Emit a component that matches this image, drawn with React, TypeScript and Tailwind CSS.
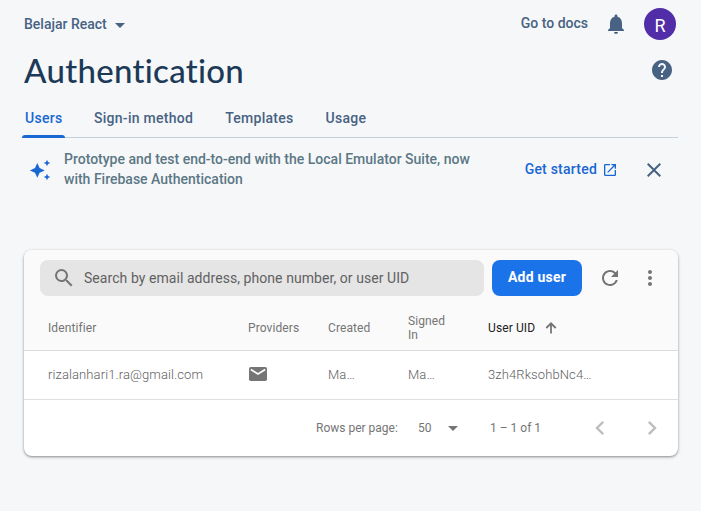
import React from 'react';
import {
  MdArrowDropDown,
  MdChevronLeft,
  MdChevronRight,
  MdClose,
  MdHelp,
  MdMoreVert,
  MdNotifications,
  MdOpenInNew,
  MdRefresh,
  MdSearch,
} from 'react-icons/md';

const tabs = ['Users', 'Sign-in method', 'Templates', 'Usage'];

function Sparkle() {
  return (
    <svg width="24" height="24" viewBox="0 0 24 24" fill="currentColor">
      <path d="M9.3 5 L11.6 10.1 L16.7 12.4 L11.6 14.7 L9.3 19.8 L7 14.7 L1.9 12.4 L7 10.1 Z" />
      <path d="M19 1.7 L20 4 L22.3 5 L20 6 L19 8.3 L18 6 L15.7 5 L18 4 Z" />
      <path d="M19 15.7 L20 18 L22.3 19 L20 20 L19 22.3 L18 20 L15.7 19 L18 18 Z" />
    </svg>
  );
}

function Mail() {
  return (
    <svg width="18" height="14" viewBox="0 0 18 14" className="-mt-[3px] ml-px">
      <rect width="18" height="14" rx="1.8" fill="#757575" />
      <path d="M1.8 2.5 L9 7 L16.2 2.5" fill="none" stroke="white" strokeWidth="1.7" />
    </svg>
  );
}

function SortArrow() {
  return (
    <svg width="16" height="16" viewBox="0 0 16 16" className="ml-2 text-[#757575]">
      <path d="M8 13.5 V4 M3.3 8 L8 3.3 L12.7 8" fill="none" stroke="currentColor" strokeWidth="1.8" />
    </svg>
  );
}

function Header() {
  return (
    <header>
      <div className="flex h-12 items-center pr-[25px] pl-6 text-[14px] font-medium text-[#476282]">
        <span className="w-[84px] whitespace-nowrap">Belajar React</span>
        <MdArrowDropDown size={24} className="mt-0.5" />
        <span className="-mt-0.5 ml-auto">Go to docs</span>
        <MdNotifications size={24} className="ml-4" />
        <span className="ml-4 flex h-8 w-8 items-center justify-center rounded-full bg-[#512da8] pt-0.5 text-[18px] font-normal text-white">
          R
        </span>
      </div>
      <div className="flex h-[45px] items-center justify-between pr-[27px] pl-6">
        <h1 className="-mt-0.5 font-['Lato','Liberation_Sans',sans-serif] text-[33px] leading-[44px] font-medium tracking-[0.3px] text-[#1c3a57] [font-variant-ligatures:none]">
          Authentication
        </h1>
        <MdHelp size={24} className="-mt-px text-[#476282]" />
      </div>
    </header>
  );
}

function Tabs() {
  return (
    <nav className="mr-[23px] ml-[22px] flex h-[45px] gap-8 border-b border-[#c3d0de] text-[14px] font-medium tracking-[0.27px] text-[#476282]">
      {tabs.map((tab, i) => (
        <div
          key={tab}
          className={
            i === 0
              ? 'relative -mr-[3px] h-[45px] w-[43px] pt-[15px] pl-[3px] leading-5 text-[#1967d2]'
              : 'pt-[15px] leading-5 whitespace-nowrap'
          }
        >
          {tab}
          {i === 0 && <span className="absolute bottom-0 left-0 h-[3px] w-[43px] rounded-t-[3px] bg-[#1967d2]" />}
        </div>
      ))}
    </nav>
  );
}

function Banner() {
  return (
    <section className="flex h-16 items-center pr-[35px] pl-7 text-[14px] font-medium">
      <span className="text-[#1967d2]">
        <Sparkle />
      </span>
      <p className="-mt-0.5 ml-3 w-[430px] leading-5 text-[#5b7785]">
        Prototype and test end-to-end with the Local Emulator Suite, now
        <br />
        with Firebase Authentication
      </p>
      <a className="ml-auto flex items-center tracking-[0.22px] text-[#1967d2]">
        <span className="-mt-0.5">Get started</span>
        <MdOpenInNew size={16} className="ml-[5px]" />
      </a>
      <MdClose size={24} className="ml-6 text-[#476282]" />
    </section>
  );
}

const columns = 'grid grid-cols-[200px_80px_80px_80px_1fr] items-center pl-6';

function UsersCard() {
  return (
    <section className="mx-6 mt-12 mr-[23px] h-[206px] overflow-hidden rounded-lg bg-white text-[#757575] shadow-[0_1px_2px_rgba(0,0,0,0.3),0_1px_3px_1px_rgba(0,0,0,0.12)]">
      <div className="h-[101px] border-b border-[#dcdcdc] bg-[#fafafa]">
        <div className="flex items-center pt-[10px] pl-4">
          <div className="flex h-9 w-[444px] items-center rounded-lg bg-[#e5e5e5] pl-3">
            <MdSearch size={24} />
            <span className="ml-2 text-[14px] tracking-[0.06px] text-[#616161]">
              Search by email address, phone number, or user UID
            </span>
          </div>
          <button className="ml-2 h-9 w-[90px] rounded-lg bg-[#1a73e8] pb-0.5 text-[14px] font-bold tracking-[0.2px] text-white">
            Add user
          </button>
          <MdRefresh size={24} className="ml-4" />
          <MdMoreVert size={24} className="ml-4" />
        </div>
        <div className={`${columns} h-[54px] pt-[9px] text-[12px] leading-[14px] tracking-[0.1px]`}>
          <span>Identifier</span>
          <span>Providers</span>
          <span>Created</span>
          <span className="w-10">Signed In</span>
          <span className="flex items-center text-[#212121]">
            User UID
            <SortArrow />
          </span>
        </div>
      </div>
      <div
        className={`${columns} h-[49px] border-b border-[#e0e0e0] text-[13px] font-light tracking-[0.1px] text-[#616161]`}
      >
        <span>rizalanhari1.ra@gmail.com</span>
        <Mail />
        <span>Ma…</span>
        <span>Ma…</span>
        <span>3zh4RksohbNc4…</span>
      </div>
      <div className="flex h-14 items-center pr-3 text-[12px]">
        <span className="ml-[292px] w-[102px]">Rows per page:</span>
        <span className="w-[23px]">50</span>
        <MdArrowDropDown size={24} />
        <span className="ml-[25px]">1 – 1 of 1</span>
        <MdChevronLeft size={28} className="ml-auto text-[#bdbdbd]" />
        <MdChevronRight size={28} className="ml-6 text-[#bdbdbd]" />
      </div>
    </section>
  );
}

export default function App() {
  return (
    <main className="h-[511px] w-[701px] overflow-hidden bg-[#f6f7f9] font-['Roboto','Liberation_Sans',sans-serif]">
      <Header />
      <Tabs />
      <Banner />
      <UsersCard />
    </main>
  );
}
